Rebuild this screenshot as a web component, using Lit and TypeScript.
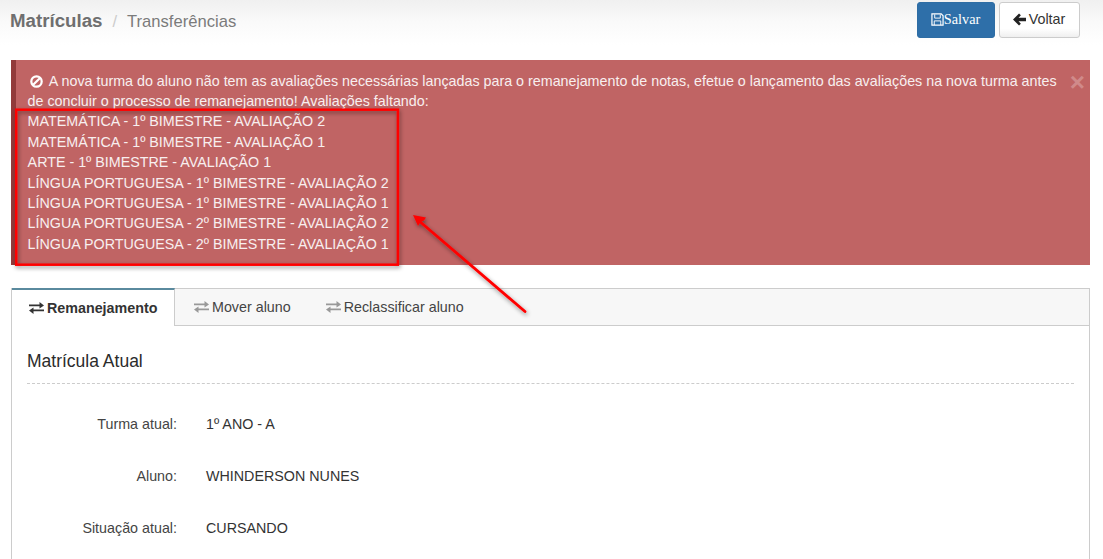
import { LitElement, html, css, svg } from "lit";
import { customElement } from "lit/decorators.js";

const swap = (c: string) => html`<svg class="swap" width="15" height="12" viewBox="0 0 15 12" style="color:${c}"><path fill="currentColor" d="M0 2.500h10.500V0L15 3.500 10.500 6.500V4.300H0zM15 7.500H4.500V5.500L0 8.500 4.500 12V9.300H15z"/></svg>`;

const items = [
  "MATEMÁTICA - 1º BIMESTRE - AVALIAÇÃO 2",
  "MATEMÁTICA - 1º BIMESTRE - AVALIAÇÃO 1",
  "ARTE - 1º BIMESTRE - AVALIAÇÃO 1",
  "LÍNGUA PORTUGUESA - 1º BIMESTRE - AVALIAÇÃO 2",
  "LÍNGUA PORTUGUESA - 1º BIMESTRE - AVALIAÇÃO 1",
  "LÍNGUA PORTUGUESA - 2º BIMESTRE - AVALIAÇÃO 2",
  "LÍNGUA PORTUGUESA - 2º BIMESTRE - AVALIAÇÃO 1",
];

@customElement("app-root")
export class AppRoot extends LitElement {
  static styles = css`
    :host { display: block; position: relative; width: 1103px; height: 559px; overflow: hidden; background: #fff;
      font-family: "Liberation Sans", Arial, sans-serif; font-size: 14.3px; color: #333; line-height: 20.4px; }
    .head { height: 45px; display: flex; justify-content: space-between; padding: 2px 23px 0 10px; box-sizing: border-box;
      background: linear-gradient(#f0f0f0, #fafafa 50%, #fff); }
    .crumbs { display: flex; align-items: baseline; padding-top: 9px; color: #777; }
    .crumbs b { font-size: 18.7px; font-weight: 700; color: #6f6f6f; }
    .crumbs i { font-style: normal; color: #ccc; margin: 0 10px; font-size: 16.6px; }
    .crumbs span { font-size: 16.6px; color: #7b7b7b; }
    .btns { display: flex; gap: 4px; align-items: flex-start; }
    .btn { height: 36px; box-sizing: border-box; border-radius: 3px; display: flex; align-items: center; justify-content: center; padding-bottom: 2px; }
    .save { width: 78px; background: #2e6fa9; border: 1px solid #2e6da4; color: #fff; font-family: "Liberation Serif", serif; font-size: 14.3px; padding-right: 1px; }
    .back { width: 81px; background: linear-gradient(#fff 75%, #efefef); border: 1px solid #ccc; color: #333; gap: 3px; padding-right: 1px; }
    .alert { margin: 15px 13px 0 11px; height: 205px; box-sizing: border-box; background: #c06464; border-left: 5px solid #923a3a;
      color: #f8efef; padding: 10.5px 30px 0 11.6px; position: relative; }
    .alert .first { text-indent: 2px; }
    .alert svg { vertical-align: -2px; margin-right: 3px; }
    .close { position: absolute; top: 10px; right: 5px; font-size: 26px; font-weight: 700; color: #d08a8a; line-height: 24px; }
    .panel { margin: 23px 13px 0 11px; border: 1px solid #ccc; border-bottom: 0; height: 300px; box-sizing: border-box; }
    .tabs { display: flex; height: 37px; background: #f7f7f7; border-bottom: 1px solid #ccc; box-sizing: border-box; }
    .tab { display: flex; align-items: center; gap: 3px; padding: 0 17px 0; color: #444; }
    .tab.active { background: #fff; font-weight: 700; color: #333; border-top: 2px solid #5a8a9e; border-right: 1px solid #ccc;
      height: 38px; box-sizing: border-box; margin-top: -1px; padding: 0 16px 0 17px; width: 163px; }
    .tab.second { padding-left: 19px; padding-right: 17px; }
    .tab.third { padding-left: 18px; }
    .body { padding: 24px 15px 0; }
    h3 { margin: 0; font-size: 17.5px; font-weight: 400; color: #2b2b2b; line-height: 22px; padding-bottom: 11px; border-bottom: 1px dashed #ccc; }
    .rows { padding-top: 30px; display: grid; grid-template-columns: 150px 1fr; column-gap: 29px; row-gap: 31.6px; }
    .rows .l { text-align: right; color: #444; }
    .rows .v { color: #333; }
    .over { position: absolute; left: 0; top: 0; pointer-events: none; }
  `;

  render() {
    return html`
      <div class="head">
        <div class="crumbs"><b>Matrículas</b><i>/</i><span>Transferências</span></div>
        <div class="btns">
          <div class="btn save"><svg width="13" height="13" viewBox="0 0 14 14"><path fill="none" stroke="#fff" stroke-width="1.300" d="M1 1h10l2 2v10H1z"/><path fill="none" stroke="#fff" d="M4 1.500v4h6v-4M3.500 13V8.500h7V13"/></svg>Salvar</div>
          <div class="btn back"><svg width="13" height="13" viewBox="0 0 14 13"><path fill="#222" d="M6.500 0 8.500 2 6 4.500h8v4H6l2.500 2.500-2 2L0 6.500z"/></svg>Voltar</div>
        </div>
      </div>
      <div class="alert">
        <div class="first"><svg width="13" height="13" viewBox="0 0 14 14"><circle cx="7" cy="7" r="5.600" fill="none" stroke="#fff" stroke-width="2.400"/><path stroke="#fff" stroke-width="2.400" d="M3.200 10.800l7.600-7.600"/></svg> A nova turma do aluno não tem as avaliações necessárias lançadas para o remanejamento de notas, efetue o lançamento das avaliações na nova turma antes de concluir o processo de remanejamento! Avaliações faltando:</div>
        ${items.map((t) => html`<div>${t}</div>`)}
        <div class="close">×</div>
      </div>
      <div class="panel">
        <div class="tabs">
          <div class="tab active">${swap("#333")}Remanejamento</div>
          <div class="tab second">${swap("#999")}Mover aluno</div>
          <div class="tab third">${swap("#999")}Reclassificar aluno</div>
        </div>
        <div class="body">
          <h3>Matrícula Atual</h3>
          <div class="rows">
            <div class="l">Turma atual:</div><div class="v">1º ANO - A</div>
            <div class="l">Aluno:</div><div class="v">WHINDERSON NUNES</div>
            <div class="l">Situação atual:</div><div class="v">CURSANDO</div>
          </div>
        </div>
      </div>
      <svg class="over" width="1103" height="559" viewBox="0 0 1103 559">
        <defs><filter id="s" x="-10%" y="-10%" width="120%" height="120%"><feDropShadow dx="1" dy="2" stdDeviation="2" flood-color="#000" flood-opacity=".45"/></filter></defs>
        ${svg`<g filter="url(#s)">
          <rect x="16.200" y="109.700" width="381.700" height="155" fill="none" stroke="#f00" stroke-width="2.500"/>
          <path d="M525 311.500 418 220" stroke="#f00" stroke-width="2.800" stroke-linecap="round" fill="none"/>
          <path d="M413 215 426 217.500 424 220.500 420.500 222 418 226z" fill="#f00"/>
        </g>`}
      </svg>
    `;
  }
}
